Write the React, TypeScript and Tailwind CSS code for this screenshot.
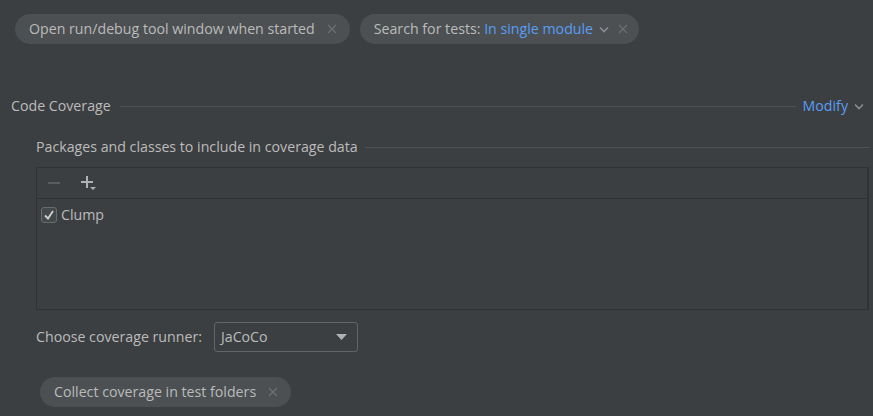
import React from 'react';

const font = { fontFamily: '"Open Sans", "Noto Sans", sans-serif' };

function Close({ className = 'ml-[12px]' }: { className?: string }) {
  return (
    <svg width="10" height="10" viewBox="0 0 10 10" className={`shrink-0 ${className}`}>
      <path d="M1 1 L9 9 M9 1 L1 9" stroke="#6e7072" strokeWidth="1.1" />
    </svg>
  );
}

function Chevron({ color = '#8c8c8c' }: { color?: string }) {
  return (
    <svg width="10" height="7" viewBox="0 0 10 7" className="shrink-0">
      <path d="M1 1.5 L5 5.5 L9 1.5" stroke={color} strokeWidth="1.6" fill="none" />
    </svg>
  );
}

function Chip({ children, className = '' }: { children: React.ReactNode; className?: string }) {
  return (
    <div
      className={`flex h-[30px] items-center rounded-full bg-[#4c5052] pl-[14px] pr-[13px] text-[#bbbbbb] ${className}`}
    >
      {children}
    </div>
  );
}

export default function App() {
  return (
    <div
      className="h-[416px] w-[873px] overflow-hidden bg-[#3c3f41] text-[14.2px] leading-[20px] text-[#bbbbbb]"
      style={font}
    >
      <div className="flex gap-[10px] pl-[15px] pt-[14px]">
        <Chip>
          Open run/debug tool window when started
          <Close />
        </Chip>
        <Chip className="!pr-[11px]">
          Search for tests:&nbsp;<span className="text-[#589df6]">In single module</span>
          <span className="ml-[6px]">
            <Chevron />
          </span>
          <Close className="ml-[9px]" />
        </Chip>
      </div>

      <div className="mt-[52px] flex h-[20px] items-center pl-[11px] pr-[9px]">
        <span>Code Coverage</span>
        <div className="ml-[9px] mr-[7px] h-px flex-1 bg-[#515151]" />
        <span className="text-[#589df6]">Modify</span>
        <span className="ml-[6px]">
          <Chevron />
        </span>
      </div>

      <div className="mt-[21px] flex h-[20px] items-center pl-[36px] pr-[3px]">
        <span>Packages and classes to include in coverage data</span>
        <div className="ml-[8px] h-px flex-1 bg-[#515151]" />
      </div>

      <div className="ml-[36px] mr-[4px] mt-[10px] h-[143px] border border-r-2 border-[#323232]">
        <div className="flex h-[31px] items-center border-b border-[#323232] pl-[10px]">
          <svg width="14" height="14" viewBox="0 0 14 14">
            <path d="M1 7 H13" stroke="#5a5d5f" strokeWidth="2" />
          </svg>
          <svg width="20" height="18" viewBox="0 0 20 18" className="ml-[19px]">
            <path d="M7 2 V14 M1 8 H13" stroke="#afb1b3" strokeWidth="2" />
            <path d="M10 13 H16 L13 16 Z" fill="#afb1b3" />
          </svg>
        </div>
        <div className="flex items-center pl-[4px] pt-[6px]">
          <div className="flex h-[16px] w-[16px] items-center justify-center rounded-[3px] border border-[#6b6b6b] bg-[#43494a]">
            <svg width="12" height="12" viewBox="0 0 12 12">
              <path d="M2 6.5 L5 9.5 L10 2" stroke="#d0d0d0" strokeWidth="1.8" fill="none" />
            </svg>
          </div>
          <span className="ml-[4px]">Clump</span>
        </div>
      </div>

      <div className="mt-[12px] flex items-center pl-[36px]">
        <span>Choose coverage runner:</span>
        <div className="ml-[12px] flex h-[30px] w-[144px] items-center justify-between rounded-[3px] border border-[#646464] bg-[#3c3f41] pl-[6px] pr-[10px]">
          <span>JaCoCo</span>
          <svg width="11" height="7" viewBox="0 0 11 7">
            <path d="M0 0 H11 L5.5 6 Z" fill="#afb1b3" />
          </svg>
        </div>
      </div>

      <div className="mt-[25px] flex pl-[40px]">
        <Chip>
          Collect coverage in test folders
          <Close />
        </Chip>
      </div>
    </div>
  );
}
